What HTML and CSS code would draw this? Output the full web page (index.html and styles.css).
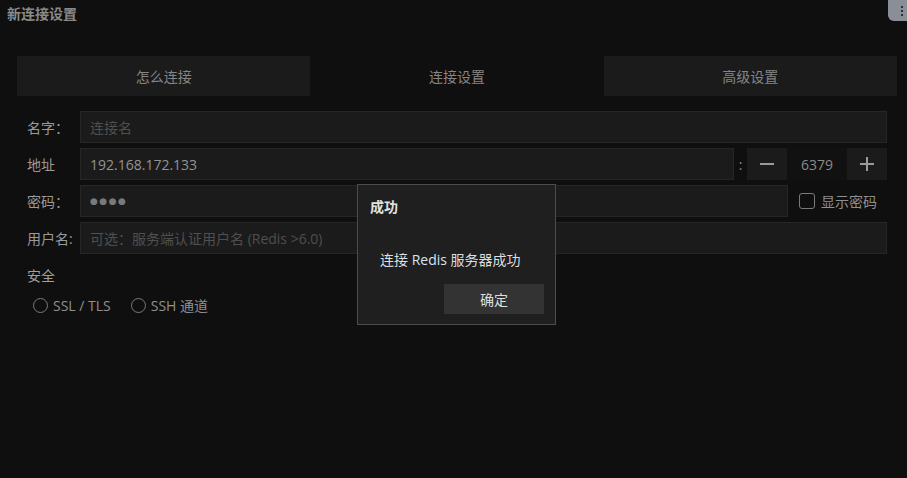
FILE: index.html
```html
<!DOCTYPE html>
<html lang="zh-CN">
<head>
  <meta charset="UTF-8" />
  <title>新连接设置</title>
  <link rel="stylesheet" href="styles.css">
</head>
<body>

  <header class="title-bar">新连接设置</header>
  <div class="menu-handle"><span></span><span></span><span></span></div>

  <nav class="tabs">
    <button class="tab">怎么连接</button>
    <button class="tab active">连接设置</button>
    <button class="tab">高级设置</button>
  </nav>

  <main class="form">
    <div class="row">
      <label class="label">名字：</label>
      <input class="field" type="text" placeholder="连接名">
    </div>

    <div class="row">
      <label class="label">地址</label>
      <input class="field" type="text" value="192.168.172.133">
      <span class="colon">:</span>
      <div class="spin">
        <button class="spin-btn">
          <svg width="14" height="14" viewBox="0 0 14 14"><path d="M0 7h14" stroke="#9a9a9a" stroke-width="2"/></svg>
        </button>
        <span class="spin-value">6379</span>
        <button class="spin-btn">
          <svg width="14" height="14" viewBox="0 0 14 14"><path d="M0 7h14M7 0v14" stroke="#9a9a9a" stroke-width="2"/></svg>
        </button>
      </div>
    </div>

    <div class="row">
      <label class="label">密码：</label>
      <input class="field dots" type="text" value="●●●●">
      <label class="check"><span class="box"></span>显示密码</label>
    </div>

    <div class="row">
      <label class="label">用户名:</label>
      <input class="field" type="text" placeholder="可选：服务端认证用户名 (Redis >6.0)">
    </div>

    <h3 class="section">安全</h3>
    <div class="radios">
      <label class="radio"><span class="dot"></span>SSL / TLS</label>
      <label class="radio"><span class="dot"></span>SSH 通道</label>
    </div>
  </main>

  <!-- Success dialog -->
  <div class="dialog">
    <h2>成功</h2>
    <p>连接 <span class="hl">Redis</span> 服务器成功</p>
    <div class="dialog-actions">
      <button>确定</button>
    </div>
  </div>

</body>
</html>
```

FILE: styles.css
```css
* { box-sizing: border-box; }

body {
  margin: 0;
  font-family: "Open Sans", "Noto Sans CJK SC", sans-serif;
  font-size: 14px;
  background-color: #0f0f0f;
  color: #999;
  height: 100vh;
  overflow: hidden;
}

.title-bar {
  height: 56px;
  padding: 3px 7px;
  font-size: 14px;
  font-weight: bold;
  color: #8a8a8a;
}

.menu-handle {
  position: absolute;
  top: 0;
  right: 0;
  width: 19px;
  height: 21px;
  background: #8a8e96;
  border-bottom-left-radius: 6px;
  display: flex;
  flex-direction: column;
  align-items: flex-end;
  justify-content: center;
  gap: 2px;
  padding-right: 4px;
}

.menu-handle span {
  width: 2px;
  height: 2px;
  background: #2a2d33;
}

.tabs {
  display: flex;
  margin: 0 10px 0 17px;
  height: 40px;
}

.tab {
  flex: 1;
  border: none;
  background: #1b1b1b;
  color: #858585;
  font-family: inherit;
  font-size: 14px;
}

.tab.active {
  background: transparent;
}

.form {
  padding: 15px 20px 0 27px;
  display: flex;
  flex-direction: column;
  gap: 5px;
}

.row {
  display: flex;
  align-items: center;
  height: 32px;
}

.label {
  width: 53px;
  flex-shrink: 0;
  color: #9a9a9a;
}

.field {
  flex: 1;
  min-width: 0;
  height: 32px;
  background: #1b1b1b;
  border: 1px solid #262626;
  color: #939393;
  font-family: inherit;
  font-size: 14px;
  padding: 0 9px;
  outline: none;
}

.field::placeholder {
  color: #4f4f4f;
}

.field.dots {
  font-family: "DejaVu Sans", sans-serif;
  font-size: 9px;
  letter-spacing: 1.5px;
  color: #7a7a7a;
}

.colon {
  width: 13px;
  text-align: center;
  color: #888;
}

.spin {
  display: flex;
  width: 140px;
  height: 32px;
  background: #1b1b1b;
}

.spin-btn {
  width: 40px;
  border: none;
  background: transparent;
  padding: 0;
  display: flex;
  align-items: center;
  justify-content: center;
}

.spin-value {
  width: 60px;
  background: #111;
  color: #8a8a8a;
  display: flex;
  align-items: center;
  justify-content: center;
}

.check {
  width: 99px;
  flex-shrink: 0;
  display: flex;
  align-items: center;
  gap: 6px;
  padding-left: 11px;
  color: #8f8f8f;
}

.box {
  width: 16px;
  height: 16px;
  border: 1px solid #7a7a7a;
  border-radius: 3px;
}

.section {
  margin: 6px 0 0;
  font-size: 14px;
  font-weight: normal;
  color: #a0a0a0;
  height: 22px;
  line-height: 22px;
}

.radios {
  display: flex;
  gap: 20px;
  padding-left: 6px;
  margin-top: 3px;
}

.radio {
  display: flex;
  align-items: center;
  gap: 5px;
  color: #8f8f8f;
}

.dot {
  width: 15px;
  height: 15px;
  border: 1px solid #7a7a7a;
  border-radius: 50%;
}

.dialog {
  position: absolute;
  left: 357px;
  top: 184px;
  width: 199px;
  height: 141px;
  background: #1f1f1f;
  border: 1px solid #4c4c4c;
  padding: 0 11px 0 12px;
}

.dialog h2 {
  margin: 12px 0 0;
  font-size: 14px;
  font-weight: bold;
  color: #e2e2e2;
  line-height: 20px;
}

.dialog p {
  margin: 33px 0 0 10px;
  color: #dedede;
  line-height: 20px;
}

.dialog .hl {
  color: #d6e4f2;
}

.dialog-actions {
  display: flex;
  justify-content: flex-end;
  margin-top: 14px;
}

.dialog-actions button {
  width: 100px;
  height: 30px;
  border: none;
  background: #333;
  color: #dedede;
  font-family: inherit;
  font-size: 14px;
}
```
